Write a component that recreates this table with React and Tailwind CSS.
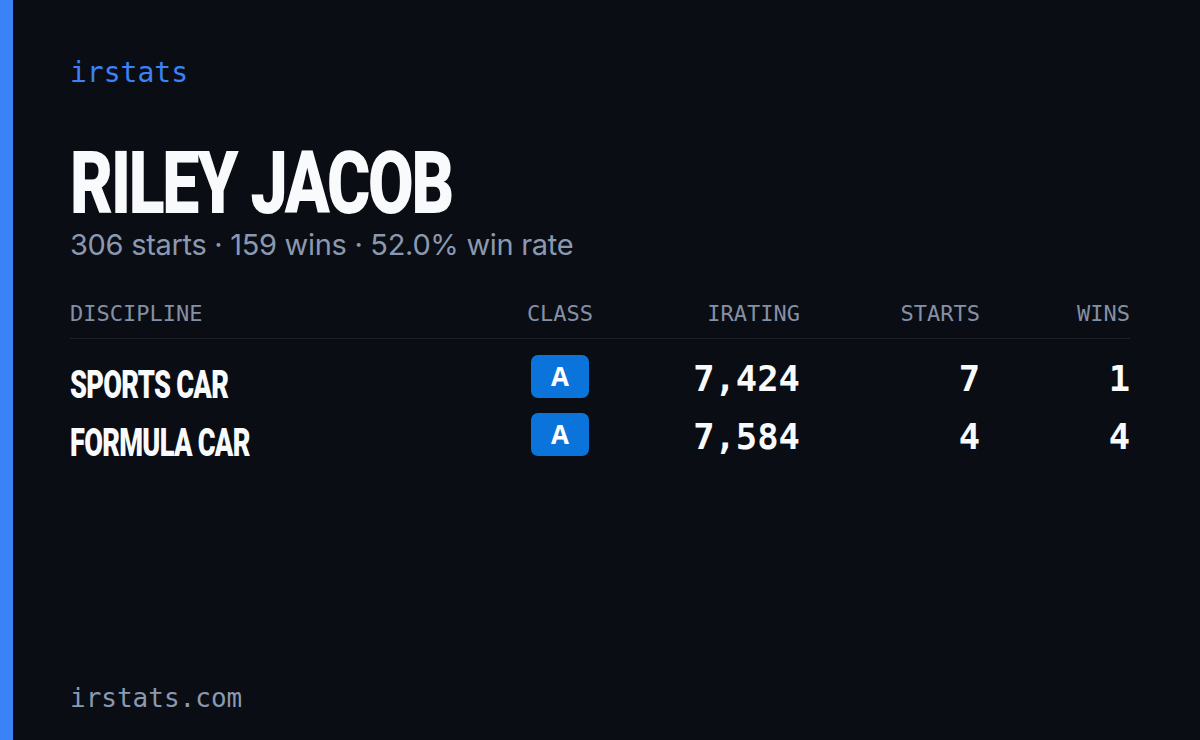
import React from "react";

const cond = { fontFamily: 'Roboto, "Liberation Sans", sans-serif' };
const mono = { fontFamily: '"DejaVu Sans Mono", "Liberation Mono", monospace' };

const rows = [
  { name: "SPORTS CAR", cls: "A", ir: "7,424", starts: "7", wins: "1" },
  { name: "FORMULA CAR", cls: "A", ir: "7,584", starts: "4", wins: "4" },
];

export default function App() {
  return (
    <div className="flex w-[1200px] h-[740px] bg-[#0a0d14] overflow-hidden">
      <div className="w-[13px] shrink-0 bg-[#3b82f6]" />
      <div className="flex flex-col flex-1 pl-[57px] pr-[70px] pt-[59px] pb-[29px]">
        <div className="text-[28px] leading-[28px] text-[#3b82f6]" style={mono}>irstats</div>
        <div className="mt-[52px] h-[88px] w-[520px] text-[88px] leading-[88px] font-black tracking-[-3px] text-[#f8fafc] origin-left scale-x-[0.752] whitespace-nowrap" style={cond}>
          RILEY JACOB
        </div>
        <div className="mt-[3px] text-[29px] leading-[30px] tracking-[-0.3px] text-[#8b99b0] whitespace-nowrap" style={{ fontFamily: 'Inter, "Open Sans", sans-serif' }}>
          306 starts · 159 wins · 52.0% win rate
        </div>
        <div className="mt-[44px] grid grid-cols-[430px_120px_180px_180px_150px] pb-[14px] border-b border-[#1b202b] text-[22px] leading-[20px] tracking-[0px] text-[#8390a5]" style={mono}>
          <div>DISCIPLINE</div>
          <div className="text-center">CLASS</div>
          <div className="text-right">IRATING</div>
          <div className="text-right">STARTS</div>
          <div className="text-right">WINS</div>
        </div>
        <div className="pt-[12px] flex flex-col">
          {rows.map((r) => (
            <div key={r.name} className="grid grid-cols-[430px_120px_180px_180px_150px] h-[58px] items-start">
              <div className="pt-[15px] text-[38px] leading-[38px] font-black tracking-[-1px] text-[#f8fafc] origin-left scale-x-[0.715] whitespace-nowrap" style={cond}>
                {r.name}
              </div>
              <div className="pt-[4px] flex justify-center">
                <div className="w-[58px] h-[43px] rounded-[7px] bg-[#0a74da] flex items-center justify-center text-[26px] font-bold text-white" style={{ fontFamily: '"Open Sans", "Liberation Sans", sans-serif' }}>
                  {r.cls}
                </div>
              </div>
              <div className="pt-[10px] text-right text-[35.5px] leading-[35px] font-bold text-[#f8fafc]" style={mono}>{r.ir}</div>
              <div className="pt-[10px] text-right text-[35.5px] leading-[35px] font-bold text-[#f8fafc]" style={mono}>{r.starts}</div>
              <div className="pt-[10px] text-right text-[35.5px] leading-[35px] font-bold text-[#f8fafc]" style={mono}>{r.wins}</div>
            </div>
          ))}
        </div>
        <div className="mt-auto text-[26px] leading-[26px] text-[#8b99b0]" style={mono}>irstats.com</div>
      </div>
    </div>
  );
}
